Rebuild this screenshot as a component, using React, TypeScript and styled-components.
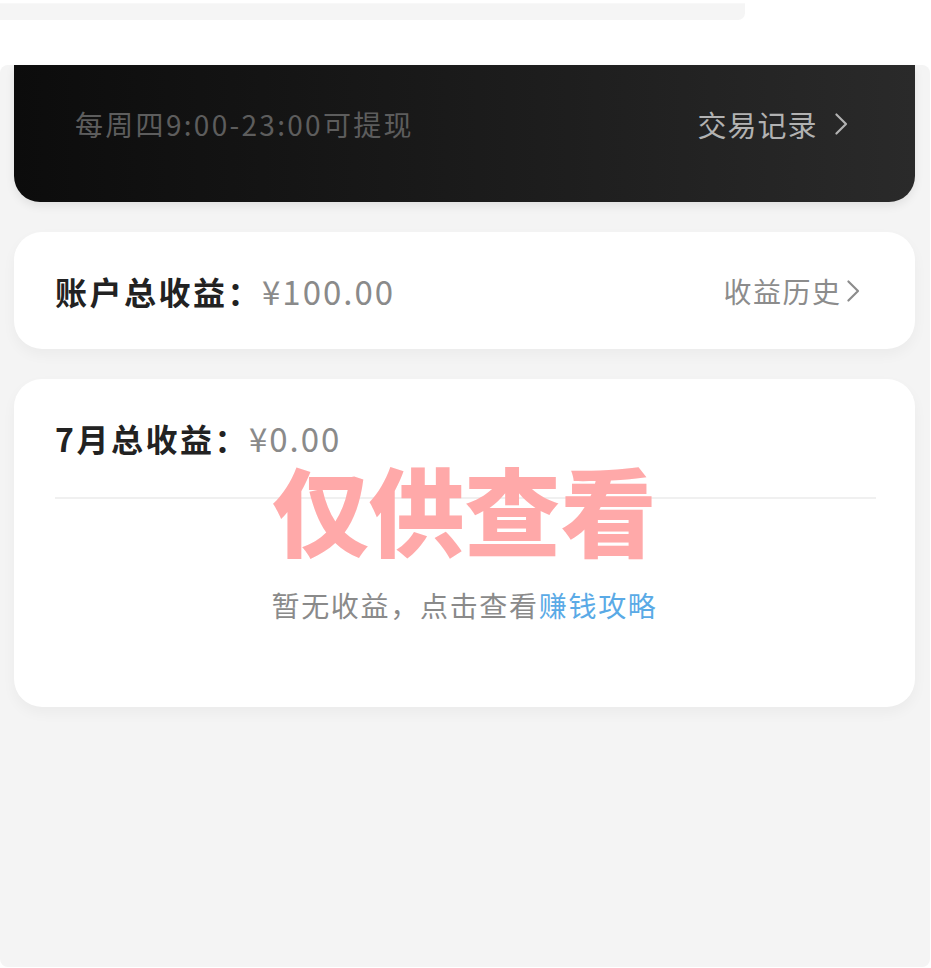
import React from "react";
import styled, { createGlobalStyle } from "styled-components";

const Global = createGlobalStyle`
  html, body { margin: 0; padding: 0; background: #ffffff; }
  body { font-family: "Noto Sans CJK SC", "Noto Sans", sans-serif; }
  * { box-sizing: border-box; }
`;

const Page = styled.div`
  width: 931px;
  min-height: 968px;
  display: flex;
  flex-direction: column;
  background: #ffffff;
`;

const TopStrip = styled.div`
  height: 65px;
  padding-top: 3px;
  display: flex;
  align-items: flex-start;
`;

const SearchBar = styled.div`
  width: 745px;
  height: 17px;
  background: #f5f5f5;
  border-top: 1px solid #f8f8f8;
  border-radius: 0 0 7px 0;
`;

const Panel = styled.div`
  width: 930px;
  height: 902px;
  background: #f4f4f4;
  border-radius: 8px;
  padding: 0 15px 0 14px;
  display: flex;
  flex-direction: column;
  gap: 30px;
`;

const WalletCard = styled.div`
  height: 137px;
  border-radius: 0 0 26px 26px;
  background: linear-gradient(90deg, #0c0c0c 0%, #1c1c1c 55%, #2a2a2a 100%);
  box-shadow: 0 4px 10px rgba(0, 0, 0, 0.08);
  padding: 0 67px 19px 61px;
  display: flex;
  align-items: center;
  justify-content: space-between;
`;

const WalletHint = styled.span`
  font-size: 28px;
  color: #5d5d5d;
  letter-spacing: 2.3px;
`;

const LinkText = styled.span<{ $color: string; $size: number; $gap: number; $spacing: number }>`
  display: flex;
  align-items: center;
  gap: ${(p) => p.$gap}px;
  font-size: ${(p) => p.$size}px;
  letter-spacing: ${(p) => p.$spacing}px;
  color: ${(p) => p.$color};
`;

const Card = styled.div<{ $height: number }>`
  position: relative;
  height: ${(p) => p.$height}px;
  background: #ffffff;
  border-radius: 28px;
  box-shadow: 0 6px 14px rgba(0, 0, 0, 0.04);
`;

const SummaryRow = styled.div`
  height: 100%;
  padding: 0 55px 0 41px;
  display: flex;
  align-items: center;
  justify-content: space-between;
`;

const Stat = styled.div`
  display: flex;
  align-items: baseline;
`;

const StatLabel = styled.span`
  font-size: 32px;
  font-weight: 700;
  letter-spacing: 2.5px;
  color: #222222;
`;

const StatValue = styled.span`
  font-size: 33px;
  letter-spacing: 2px;
  color: #8a8a8a;
  margin-left: 0px;
`;

const MonthHeader = styled.div`
  height: 118px;
  padding: 0 41px 1px 41px;
  display: flex;
  align-items: center;
`;

const Divider = styled.div`
  height: 2px;
  margin: 0 39px 0 41px;
  background: #f0f0f0;
`;

const EmptyHint = styled.div`
  margin-top: 86px;
  text-align: center;
  font-size: 28px;
  letter-spacing: 1.7px;
  color: #8a8a8a;
`;

const Highlight = styled.span`
  color: #5aaae6;
`;

const Watermark = styled.div`
  position: absolute;
  left: 50%;
  top: 129px;
  transform: translate(-50%, -50%);
  font-size: 96px;
  font-weight: 900;
  color: #ffa9a9;
  white-space: nowrap;
  line-height: 1;
  pointer-events: none;
`;

const Chevron = ({ size, color, width }: { size: number; color: string; width: number }) => (
  <svg width={size * 0.6} height={size} viewBox="0 0 12 20" fill="none">
    <path d="M2 2 L10 10 L2 18" stroke={color} strokeWidth={width} strokeLinecap="round" strokeLinejoin="round" />
  </svg>
);

export default function App() {
  return (
    <>
      <Global />
      <Page>
        <TopStrip>
          <SearchBar />
        </TopStrip>
        <Panel>
          <WalletCard>
            <WalletHint>每周四9:00-23:00可提现</WalletHint>
            <LinkText $color="#b2b2b2" $size={29} $gap={16} $spacing={1}>
              交易记录
              <Chevron size={24} color="#b2b2b2" width={1.8} />
            </LinkText>
          </WalletCard>
          <Card $height={117}>
            <SummaryRow>
              <Stat>
                <StatLabel>账户总收益：</StatLabel>
                <StatValue>¥100.00</StatValue>
              </Stat>
              <LinkText $color="#8c8c8c" $size={28} $gap={4} $spacing={1.5}>
                收益历史
                <Chevron size={24} color="#8c8c8c" width={1.8} />
              </LinkText>
            </SummaryRow>
          </Card>
          <Card $height={328}>
            <MonthHeader>
              <Stat>
                <StatLabel>7月总收益：</StatLabel>
                <StatValue>¥0.00</StatValue>
              </Stat>
            </MonthHeader>
            <Divider />
            <EmptyHint>
              暂无收益，点击查看<Highlight>赚钱攻略</Highlight>
            </EmptyHint>
            <Watermark>仅供查看</Watermark>
          </Card>
        </Panel>
      </Page>
    </>
  );
}
